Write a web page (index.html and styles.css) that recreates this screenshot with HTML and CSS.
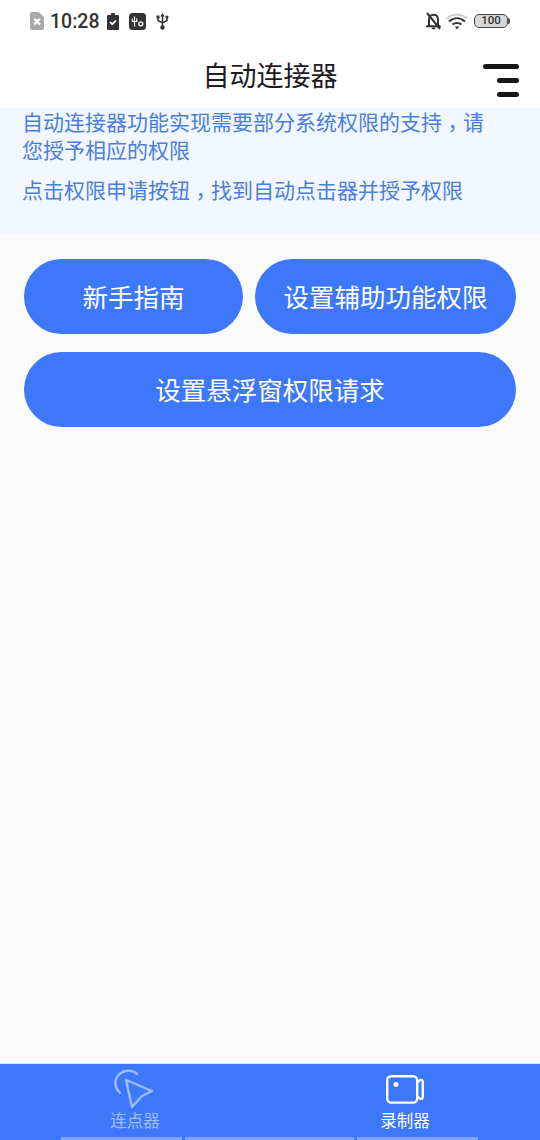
FILE: index.html
```html
<!DOCTYPE html>
<html lang="zh-CN">
<head>
<meta charset="utf-8">
<title>自动连接器</title>
<link rel="stylesheet" href="styles.css">
</head>
<body>
<div class="app">
  <div class="status">
    <div class="status-side">
      <svg class="ic" width="14" height="18" viewBox="0 0 14 18"><path d="M2 0h6.500L14 5v11a2 2 0 0 1-2 2H2a2 2 0 0 1-2-2V2a2 2 0 0 1 2-2z" fill="#a8a8a8"/><path d="M4.200 6.800l5.600 5.600M9.800 6.800l-5.600 5.600" stroke="#fff" stroke-width="2.200"/></svg>
      <span class="time">10:28</span>
      <svg class="ic clip" width="12" height="17" viewBox="0 0 12 17"><path d="M1 2h3V0h4v2h3a1 1 0 0 1 1 1v13a1 1 0 0 1-1 1H1a1 1 0 0 1-1-1V3a1 1 0 0 1 1-1z" fill="#333"/><path d="M3 9l2.200 2.200L9 7.500" stroke="#fff" stroke-width="1.700" fill="none"/></svg>
      <svg class="ic box" width="17" height="17" viewBox="0 0 17 17"><rect width="17" height="17" rx="3.500" fill="#333"/><path d="M5.500 3.500v10M3.300 5.500v3h4.400v-3" stroke="#fff" stroke-width="1.200" fill="none"/><circle cx="11.800" cy="10.800" r="2" stroke="#fff" stroke-width="1.300" fill="none"/></svg>
      <svg class="ic usb" width="13" height="17" viewBox="0 0 13 17"><path d="M6.500 2v12M2 5v2.500l4.500 2.500 4.500-2.500V5" stroke="#333" stroke-width="1.500" fill="none"/><circle cx="6.500" cy="14.500" r="2.200" fill="#333"/><path d="M4.300 3.500L6.500 0l2.200 3.500z" fill="#333"/><rect x=".5" y="2.500" width="3" height="3" fill="#333"/><circle cx="11" cy="4" r="1.600" fill="#333"/></svg>
    </div>
    <div class="status-side">
      <svg class="ic" width="15" height="18" viewBox="0 0 15 18"><path d="M3 13V7.500C3 4.500 4.800 2.800 7.500 2.800S12 4.500 12 7.500V13l1.500 1.300H1.500z" fill="none" stroke="#333" stroke-width="2"/><path d="M5.500 15.500h4a2 2 0 0 1-4 0z" fill="#333"/><path d="M1 1l13 16" stroke="#333" stroke-width="2"/></svg>
      <svg class="ic wifi" width="22" height="17" viewBox="0 0 22 17"><path d="M1 5.500C6 .5 16 .5 21 5.500" stroke="#d0d0d0" stroke-width="2" fill="none"/><path d="M3 8.500C8 4 14 4 19 8.500" stroke="#333" stroke-width="2" fill="none"/><path d="M6.500 11.500C9 9.500 13 9.500 15.500 11.500" stroke="#333" stroke-width="2" fill="none"/><path d="M8.800 13.500h4.400L11 16.500z" fill="#333"/></svg>
      <div class="battery"><span class="batt-text">100</span></div><span class="batt-cap"></span>
    </div>
  </div>
  <header class="title-bar">
    <h1 class="title">自动连接器</h1>
    <div class="menu"><span class="m1"></span><span class="m2"></span><span class="m2"></span></div>
  </header>
  <section class="notice">
    <p class="notice-a">自动连接器功能实现需要部分系统权限的支持<span class="comma" lang="zh-TW">，</span>请您授予相应的权限</p>
    <p class="notice-b">点击权限申请按钮<span class="comma" lang="zh-TW">，</span>找到自动点击器并授予权限</p>
  </section>
  <main class="content">
    <div class="row">
      <button class="btn short">新手指南</button>
      <button class="btn grow">设置辅助功能权限</button>
    </div>
    <button class="btn wide">设置悬浮窗权限请求</button>
  </main>
  <nav class="tabs">
    <div class="tab dim">
      <svg class="icon-arrow" width="42" height="40" viewBox="0 0 42 40" fill="none" stroke="#fff" stroke-width="2.400" stroke-linejoin="round" stroke-linecap="round"><path d="M23 5C19 .5 10 .5 5 5.500S0 18 6 24"/><path d="M12 11l26 11-10 5-10 11z"/></svg>
      <span>连点器</span>
    </div>
    <div class="tab">
      <svg class="icon-cam" width="40" height="30" viewBox="0 0 40 30" fill="none" stroke="#fff" stroke-width="2.400" stroke-linejoin="round"><rect x="2.200" y="1.200" width="30" height="26.400" rx="4"/><path d="M32.200 7l3-1.800c1.800-.6 2.600.3 2.600 2.300v13.800c0 2-.8 2.900-2.600 2.300l-3-1.800"/><circle cx="11" cy="9.500" r="2.500" fill="#fff" stroke="none"/></svg>
      <span>录制器</span>
    </div>
    <div class="home-strip"><i class="s1"></i><i class="s2"></i><i class="s3"></i></div>
  </nav>
</div>
</body>
</html>
```

FILE: styles.css
```css
* { box-sizing: border-box; }
html, body { margin: 0; padding: 0; }
body { font-family: "Noto Sans CJK SC", Roboto, sans-serif; }
.app { width: 540px; height: 1140px; display: flex; flex-direction: column; background: #fafafa; overflow: hidden; }
.status { height: 44px; background: #fff; display: flex; justify-content: space-between; align-items: center; padding: 0 30px 2px 30px; flex: none; }
.status-side { display: flex; align-items: center; }
.ic { display: block; flex: none; }
.time { font-family: Roboto, sans-serif; font-weight: 500; font-size: 19.500px; color: #333; margin-left: 6px; }
.clip { margin-left: 8px; }
.box { margin-left: 10px; }
.usb { margin-left: 10px; }
.wifi { margin-left: 5px; }
.battery { margin-left: 6px; width: 34px; height: 14px; border: 1.500px solid #444; border-radius: 5px; background: #d8d8d8; display: flex; align-items: center; justify-content: center; }
.batt-text { font-family: Roboto, sans-serif; font-size: 11.500px; font-weight: 500; color: #333; line-height: 1; }
.batt-cap { width: 2px; height: 6px; background: #555; border-radius: 0 2px 2px 0; }
.title-bar { height: 64px; background: #fff; display: flex; align-items: center; justify-content: center; padding-bottom: 4px; position: relative; flex: none; }
.title { margin: 0; font-size: 27px; font-weight: 400; color: #1c1c1c; line-height: 1; }
.menu { position: absolute; right: 21px; top: 20px; width: 36px; display: flex; flex-direction: column; align-items: flex-end; gap: 9px; }
.menu span { display: block; height: 5px; border-radius: 3px; background: #161616; }
.m1 { width: 36px; }
.m2 { width: 22px; }
.notice { height: 126px; background: #f1f6ff; padding: 0 22px 0; flex: none; color: #4a7fdb; font-size: 21px; line-height: 28px; }
.notice p { margin: 0; }
.notice-a { width: 470px; }
.notice .notice-a { margin-top: -1px; }
.notice .notice-b { margin-top: 12px; }
.comma { display: inline-block; font-family: "Noto Sans CJK TC", sans-serif; transform: translateY(6px); }
.content { flex: 1; padding: 25px 24px 0; display: flex; flex-direction: column; gap: 18px; }
.row { display: flex; gap: 12px; }
.btn { border: none; height: 75px; border-radius: 38px; background: #3d78fa; color: #fff; font-family: inherit; font-size: 25.500px; padding: 0 0 2px; }
.short { width: 219px; flex: none; }
.grow { flex: 1; }
.wide { width: 100%; }
.tabs { height: 77px; background: #3d78fa; display: flex; position: relative; flex: none; border-top: 1px solid #dfe9f5; }
.tab { flex: 1; display: flex; flex-direction: column; align-items: center; color: #fff; font-size: 16.500px; line-height: 20px; }
.icon-arrow { display: block; margin: 5px 0 1px; }
.icon-cam { display: block; margin: 11px 0 5px; }
.dim { opacity: .5; }
.home-strip { position: absolute; left: 61px; bottom: 0; display: flex; gap: 3px; height: 3px; }
.home-strip i { display: block; height: 3px; background: #7ea5fd; }
.s1 { width: 121px; }
.s2 { width: 169px; }
.s3 { width: 121px; }
```
